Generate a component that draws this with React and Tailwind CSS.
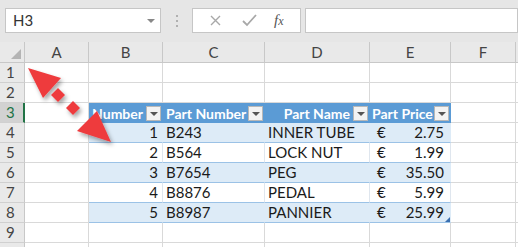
import React from 'react'

const cols = [
  { key: 'A', w: 'w-[64px]' },
  { key: 'B', w: 'w-[74px]' },
  { key: 'C', w: 'w-[102px]' },
  { key: 'D', w: 'w-[105px]' },
  { key: 'E', w: 'w-[81px]' },
  { key: 'F', w: 'w-[65px]' },
  { key: 'G', w: 'w-[40px]' },
]

const parts = [
  { n: 1, num: 'B243', name: 'INNER TUBE', price: '2.75' },
  { n: 2, num: 'B564', name: 'LOCK NUT', price: '1.99' },
  { n: 3, num: 'B7654', name: 'PEG', price: '35.50' },
  { n: 4, num: 'B8876', name: 'PEDAL', price: '5.99' },
  { n: 5, num: 'B8987', name: 'PANNIER', price: '25.99' },
]

const FilterBtn = () => (
  <span className="absolute right-[2px] top-[3px] w-[15px] h-[15px] bg-[#f3f3f3] border border-[#b8b8b8] flex items-center justify-center">
    <span className="w-0 h-0 border-l-[4px] border-r-[4px] border-t-[4px] border-l-transparent border-r-transparent border-t-[#555]" />
  </span>
)

const RowHeader = ({ label, active }) => (
  <div
    className={`w-[25px] h-full shrink-0 flex items-center pl-[6px] text-[15px] border-b border-r ${
      active ? 'bg-[#d2d2d2] border-r-[#217346] border-r-2 text-[#217346]' : 'bg-[#e9e9e9] border-r-[#c8c8c8] text-[#444]'
    } border-b-[#d0d0d0]`}
  >
    {label}
  </div>
)

const Blank = ({ w }) => <div className={`${w} h-full shrink-0 border-r border-b border-[#d9d9d9]`} />

function TableRow({ p, i }) {
  const band = i % 2 === 0
  const bg = band ? 'bg-[#ddebf7]' : 'bg-white'
  const cell = `h-full shrink-0 border-b border-b-[#9bc2e6] border-r ${band ? 'border-r-[#ddebf7]' : 'border-r-[#dfe6ee]'} ${bg} flex items-center`
  return (
    <>
      <div className={`w-[74px] ${cell} justify-end pr-[4px]`}>{p.n}</div>
      <div className={`w-[102px] ${cell} pl-[3px]`}>{p.num}</div>
      <div className={`w-[105px] ${cell} pl-[3px]`}>{p.name}</div>
      <div className={`w-[81px] ${cell} relative pl-[7px] pr-[6px] justify-between border-r-[#9bc2e6]`}>
        <span>€</span>
        <span>{p.price}</span>
        {i === 4 && (
          <span className="absolute right-0 bottom-0 w-0 h-0 border-l-[5px] border-b-[5px] border-l-transparent border-b-[#3a6fb0]" />
        )}
      </div>
    </>
  )
}

export default function App() {
  const rows = [1, 2, 3, 4, 5, 6, 7, 8, 9, 10]
  return (
    <div className="relative w-[518px] h-[247px] overflow-hidden bg-white font-['Lato','Liberation_Sans',sans-serif] text-[15px] text-[#1a1a1a]">
      {/* formula bar */}
      <div className="h-[42px] bg-[#e6e6e6] flex items-start pt-[8px] pl-[5px]">
        <div className="w-[156px] h-[25px] bg-white border border-[#c6c6c6] flex items-center justify-between pl-[7px] pr-[5px] text-[15px] text-[#333]">
          <span>H3</span>
          <span className="w-0 h-0 border-l-[4px] border-r-[4px] border-t-[4px] border-l-transparent border-r-transparent border-t-[#888]" />
        </div>
        <div className="w-[31px] h-[25px] flex flex-col items-center justify-center gap-[3px]">
          <span className="w-[2px] h-[2px] bg-[#b0b0b0]" />
          <span className="w-[2px] h-[2px] bg-[#b0b0b0]" />
          <span className="w-[2px] h-[2px] bg-[#b0b0b0]" />
        </div>
        <div className="w-[109px] h-[25px] bg-white border border-[#c6c6c6] flex items-center">
          <svg width="36" height="23" viewBox="0 0 36 23" className="ml-[6px]">
            <path d="M12 7 L21 16 M21 7 L12 16" stroke="#a8a8a8" strokeWidth="1.4" fill="none" />
          </svg>
          <svg width="30" height="23" viewBox="0 0 30 23">
            <path d="M8 12 L12 16 L21 6" stroke="#a8a8a8" strokeWidth="1.8" fill="none" />
          </svg>
          <span className="ml-[9px] font-['Liberation_Serif',serif] italic text-[15px] text-[#555]">
            f<span className="text-[12px]">x</span>
          </span>
        </div>
        <div className="ml-[4px] flex-1 h-[25px] bg-white border border-[#c6c6c6]" />
      </div>

      {/* sheet grid */}
      <div className="flex flex-col">
        <div className="h-[21px] flex bg-[#e9e9e9] text-[#444] text-[15px]">
          <div className="w-[25px] h-full shrink-0 border-r border-b border-[#c8c8c8] relative">
            <span className="absolute right-[3px] bottom-[3px] w-0 h-0 border-l-[10px] border-b-[10px] border-l-transparent border-b-[#b4b4b4]" />
          </div>
          {cols.map((c) => (
            <div key={c.key} className={`${c.w} h-full shrink-0 border-r border-b border-[#c8c8c8] flex items-center justify-center`}>
              {c.key === 'G' ? '' : c.key}
            </div>
          ))}
        </div>

        {rows.map((r) => (
          <div key={r} className="h-[20px] flex shrink-0">
            <RowHeader label={r === 10 ? '' : r} active={r === 3} />
            <Blank w="w-[64px]" />
            {r === 3 ? (
              <>
                <div className="w-[74px] h-full shrink-0 bg-[#5b9bd5] text-white text-[14px] font-bold relative overflow-hidden flex items-center justify-end pr-[20px]">
                  <span className="whitespace-nowrap">Number</span>
                  <FilterBtn />
                </div>
                <div className="w-[102px] h-full shrink-0 bg-[#5b9bd5] text-white text-[14px] font-bold relative flex items-center pl-[3px]">
                  <span className="whitespace-nowrap">Part Number</span>
                  <FilterBtn />
                </div>
                <div className="w-[105px] h-full shrink-0 bg-[#5b9bd5] text-white text-[14px] font-bold relative flex items-center justify-end pr-[20px]">
                  <span className="whitespace-nowrap">Part Name</span>
                  <FilterBtn />
                </div>
                <div className="w-[81px] h-full shrink-0 bg-[#5b9bd5] text-white text-[14px] font-bold relative overflow-hidden flex items-center pl-[2px]">
                  <span className="whitespace-nowrap">Part Price</span>
                  <FilterBtn />
                </div>
              </>
            ) : r >= 4 && r <= 8 ? (
              <TableRow p={parts[r - 4]} i={r - 4} />
            ) : (
              <>
                <Blank w="w-[74px]" />
                <Blank w="w-[102px]" />
                <Blank w="w-[105px]" />
                <Blank w="w-[81px]" />
              </>
            )}
            <Blank w="w-[65px]" />
            <Blank w="w-[40px]" />
          </div>
        ))}
      </div>

      {/* red arrow overlay */}
      <svg className="absolute left-0 top-0 pointer-events-none" width="518" height="247" viewBox="0 0 518 247">
        <defs>
          <filter id="sh" x="-50%" y="-50%" width="200%" height="200%">
            <feDropShadow dx="2" dy="3" stdDeviation="2" floodColor="#000" floodOpacity="0.35" />
          </filter>
        </defs>
        <g fill="#ee3b3e" filter="url(#sh)">
          <polygon points="28,68 61,78 43,98" />
          <polygon points="58,88 65,95 58,102 51,95" />
          <polygon points="73,101 80,108 73,115 66,108" />
          <polygon points="97,111 77,131 111,142" />
        </g>
      </svg>
    </div>
  )
}
